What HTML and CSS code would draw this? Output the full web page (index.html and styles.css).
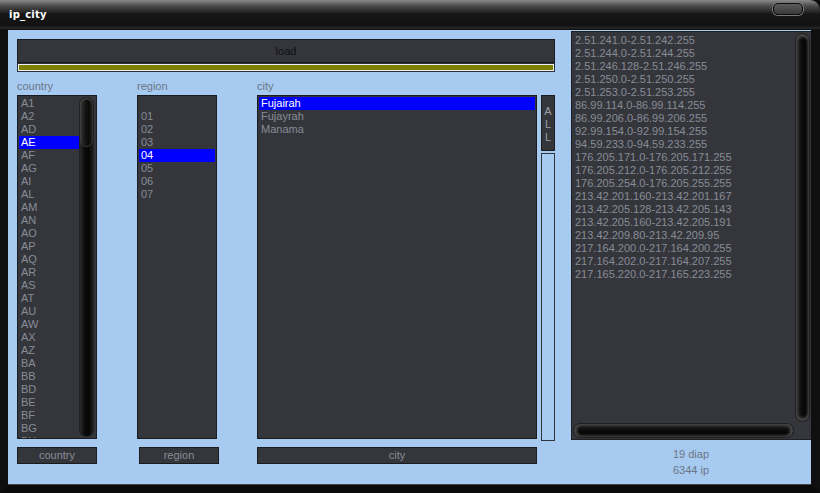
FILE: index.html
```html
<!DOCTYPE html>
<html lang="en">
<head>
    <meta charset="UTF-8">
    <title>ip_city</title>
    <link rel="stylesheet" href="styles.css">
</head>
<body>
    <div class="window">
        <div class="titlebar">
            <span class="title">ip_city</span>
            <span class="title-btn"></span>
        </div>
        <div class="frame">
            <div class="client">
                <div class="left">
                    <button class="btn-load">load</button>
                    <div class="progress"><div class="progress-fill"></div></div>

                    <div class="columns">
                        <div class="col col-country">
                            <div class="col-label">country</div>
                            <div class="listbox">
                                <ul class="items">
                                    <li>A1</li><li>A2</li><li>AD</li><li class="sel">AE</li><li>AF</li><li>AG</li>
                                    <li>AI</li><li>AL</li><li>AM</li><li>AN</li><li>AO</li><li>AP</li>
                                    <li>AQ</li><li>AR</li><li>AS</li><li>AT</li><li>AU</li><li>AW</li>
                                    <li>AX</li><li>AZ</li><li>BA</li><li>BB</li><li>BD</li><li>BE</li>
                                    <li>BF</li><li>BG</li><li>BH</li>
                                </ul>
                                <div class="vscroll"><div class="thumb"></div></div>
                            </div>
                            <button class="btn-col">country</button>
                        </div>

                        <div class="col col-region">
                            <div class="col-label">region</div>
                            <div class="listbox">
                                <ul class="items">
                                    <li>&nbsp;</li><li>01</li><li>02</li><li>03</li><li class="sel">04</li>
                                    <li>05</li><li>06</li><li>07</li>
                                </ul>
                            </div>
                            <button class="btn-col btn-shift">region</button>
                        </div>

                        <div class="col col-city">
                            <div class="col-label">city</div>
                            <div class="listbox">
                                <ul class="items">
                                    <li class="sel">Fujairah</li><li>Fujayrah</li><li>Manama</li>
                                </ul>
                            </div>
                            <button class="btn-col">city</button>
                        </div>

                        <div class="col col-all">
                            <div class="col-label"></div>
                            <button class="btn-all">A<br>L<br>L</button>
                            <div class="all-box"></div>
                        </div>
                    </div>
                </div>

                <div class="right">
                    <div class="ip-panel">
                        <ul class="ip-list">
                            <li>2.51.241.0-2.51.242.255</li>
                            <li>2.51.244.0-2.51.244.255</li>
                            <li>2.51.246.128-2.51.246.255</li>
                            <li>2.51.250.0-2.51.250.255</li>
                            <li>2.51.253.0-2.51.253.255</li>
                            <li>86.99.114.0-86.99.114.255</li>
                            <li>86.99.206.0-86.99.206.255</li>
                            <li>92.99.154.0-92.99.154.255</li>
                            <li>94.59.233.0-94.59.233.255</li>
                            <li>176.205.171.0-176.205.171.255</li>
                            <li>176.205.212.0-176.205.212.255</li>
                            <li>176.205.254.0-176.205.255.255</li>
                            <li>213.42.201.160-213.42.201.167</li>
                            <li>213.42.205.128-213.42.205.143</li>
                            <li>213.42.205.160-213.42.205.191</li>
                            <li>213.42.209.80-213.42.209.95</li>
                            <li>217.164.200.0-217.164.200.255</li>
                            <li>217.164.202.0-217.164.207.255</li>
                            <li>217.165.220.0-217.165.223.255</li>
                        </ul>
                        <div class="vbar"></div>
                        <div class="hbar"></div>
                        <div class="corner"></div>
                    </div>
                    <div class="status">19 diap<br>6344 ip</div>
                </div>
            </div>
        </div>
    </div>
</body>
</html>
```

FILE: styles.css
```css
body { margin: 0; background: #000; font-family: "Liberation Sans", Arial, sans-serif; font-size: 11px; }

.window {
    width: 820px;
    height: 493px;
    background: #0c0c0c;
    overflow: hidden;
}

/* title bar */
.titlebar {
    height: 30px;
    position: relative;
    background: linear-gradient(#8a8a8a 0, #4a4a4a 6px, #262626 12px, #161616 14px, #121212 26px, #2a2a2a 28px, #0a0a0a 30px);
    border-radius: 0 10px 0 0;
}
.title {
    position: absolute;
    left: 9px;
    top: 9px;
    color: #fff;
    font-family: "DejaVu Sans", Verdana, sans-serif;
    font-weight: bold;
    font-size: 10px;
    letter-spacing: 0.2px;
}
.title-btn {
    position: absolute;
    left: 773px;
    top: 3px;
    width: 28px;
    height: 10px;
    border: 1px solid #0b0b0b;
    border-radius: 5px;
    background: linear-gradient(#5a5a5a, #3a3a3a);
    box-shadow: 0 0 0 1px #777;
}

/* window body */
.frame {
    height: 455px;
    border-left: 8px solid #0f0f0f;
    border-right: 9px solid #0f0f0f;
    border-bottom: 8px solid #0a0a0a;
}
.client {
    display: flex;
    height: 455px;
    background: #a6caf0;
    border-bottom: 1px solid #444;
    box-sizing: border-box;
}
.left {
    width: 563px;
    padding: 9px 0 0 9px;
    box-sizing: border-box;
}

.btn-load {
    display: block;
    width: 538px;
    height: 24px;
    padding: 0;
    background: #35363c;
    border: 1px solid #1c1d21;
    color: #0e0f12;
    font: 11px "Liberation Sans", Arial, sans-serif;
}
.progress {
    width: 538px;
    height: 9px;
    box-sizing: border-box;
    border: 1px solid #2e3138;
    background: #e6eef8;
    padding: 1px;
}
.progress-fill { height: 100%; background: #808000; }

.columns { display: flex; margin-top: 9px; }
.col { display: flex; flex-direction: column; width: 80px; }
.col-region, .col-city { margin-left: 40px; }
.col-city { width: 280px; }
.col-all { width: 14px; margin-left: 4px; }

.col-label {
    height: 14px;
    line-height: 10px;
    color: #6c7686;
}

.listbox {
    position: relative;
    height: 344px;
    box-sizing: border-box;
    background: #35363c;
    border: 1px solid #1b1c20;
    padding: 1px;
    overflow: hidden;
}
.items { list-style: none; margin: 0; padding: 0; }
.items li {
    height: 13px;
    line-height: 13px;
    padding-left: 2px;
    color: #878c96;
    white-space: nowrap;
}
.col-country .items li { width: 58px; }
.items li.sel { background: #0000ff; color: #fff; }

/* country scrollbar: black capsule with glossy thumb */
.vscroll {
    position: absolute;
    left: 61px;
    top: 1px;
    width: 15px;
    height: 340px;
    border-radius: 7px;
    background: linear-gradient(to right, #2b2b2b, #0c0c0c 35%, #050505 65%, #1e1e1e);
    border: 1px solid #222;
    box-sizing: border-box;
}
.thumb {
    height: 48px;
    border-radius: 7px;
    background: linear-gradient(to right, #3a3a3a, #151515 40%, #0a0a0a 70%, #2a2a2a);
    box-shadow: inset 0 1px 2px #555, 0 1px 0 #3c3c3c;
}

.btn-col {
    width: 80px;
    height: 17px;
    margin-top: 8px;
    padding: 0;
    background: #35363c;
    border: 1px solid #1b1c20;
    color: #878c96;
    font: 11px "Liberation Sans", Arial, sans-serif;
    line-height: 15px;
}
.col-city .btn-col { width: 280px; }
.btn-shift { margin-left: 2px; }

.btn-all {
    width: 14px;
    height: 56px;
    padding: 2px 0 0;
    background: #35363c;
    border: 1px solid #1b1c20;
    color: #9a9ea8;
    font: 11px "Liberation Sans", Arial, sans-serif;
    line-height: 13px;
    vertical-align: top;
}
.all-box {
    height: 286px;
    margin-top: 2px;
    border: 1px solid #30343c;
}

/* ip ranges panel */
.right { width: 240px; }
.ip-panel {
    display: grid;
    grid-template-columns: 1fr 16px;
    grid-template-rows: 1fr 17px;
    height: 409px;
    margin-top: 1px;
    box-sizing: border-box;
    background: #35363c;
    border: 1px solid #1e1f23;
    border-right: none;
}
.ip-list {
    list-style: none;
    margin: 0;
    padding: 2px 0 0 3px;
    overflow: hidden;
}
.ip-list li {
    height: 13px;
    line-height: 13px;
    color: #878c96;
    white-space: nowrap;
}
.vbar {
    margin: 1px 1px 0 0;
    border-radius: 7px;
    border: 1px solid #202020;
    background: linear-gradient(to right, #3a3a3a, #121212 35%, #050505 65%, #202020);
    box-shadow: inset 0 3px 3px #4a4a4a, inset 0 -3px 3px #4a4a4a;
}
.hbar {
    margin: 1px 1px 1px 1px;
    border-radius: 7px;
    border: 1px solid #202020;
    background: linear-gradient(#3a3a3a, #121212 35%, #050505 65%, #202020);
    box-shadow: inset 3px 0 3px #4a4a4a, inset -3px 0 3px #4a4a4a;
}
.corner { background: #35363c; }

.status {
    margin-top: 6px;
    text-align: center;
    line-height: 16px;
    color: #6c7686;
}
```
